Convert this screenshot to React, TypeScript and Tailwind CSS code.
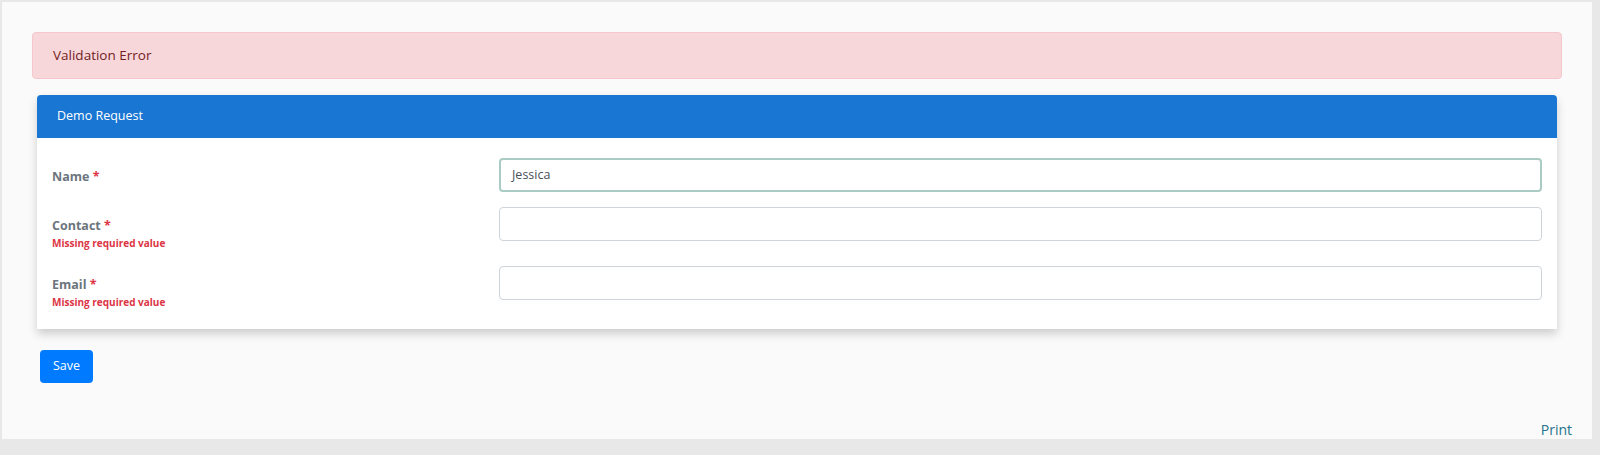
const fields = [
  { label: "Name", value: "Jessica", error: false, focused: true },
  { label: "Contact", value: "", error: true, focused: false },
  { label: "Email", value: "", error: true, focused: false },
];

export default function App() {
  return (
    <div className="min-h-[455px] bg-[#e8e8e8] pt-[2px] pl-[2px] pr-[8px] pb-[16px] font-['Open_Sans',sans-serif]">
      <div className="h-[437px] bg-[#fafafa] px-[30px] pt-[30px] flex flex-col">
        {/* Alert */}
        <div className="h-[47px] flex items-center px-[20px] bg-[#f8d7da] border border-[#f5c6cb] rounded-[4px] text-[#721c24] text-[13.5px]">
          Validation Error
        </div>

        {/* Card */}
        <div className="mx-[5px] mt-[16px] bg-white rounded-t-[4px] shadow-[0_5px_10px_rgba(0,0,0,0.18)]">
          <div className="h-[43px] flex items-center px-[20px] bg-[#1976d2] rounded-t-[4px] text-white text-[12.5px]">
            Demo Request
          </div>
          <div className="pt-[20px] px-[15px] pb-[19px] flex flex-col gap-[15px]">
            {fields.map((f) => (
              <div key={f.label} className="grid grid-cols-[30%_70%]">
                <div className="pt-[9px]">
                  <div className="leading-[20px] text-[12.5px] font-bold text-[#6c757d]">
                    {f.label} <span className="text-[#dc3545]">*</span>
                  </div>
                  {f.error && (
                    <div className="leading-[15px] text-[10px] font-bold text-[#dc3545]">
                      Missing required value
                    </div>
                  )}
                </div>
                <div
                  className={`h-[34px] flex items-center px-[11px] bg-white rounded-[4px] text-[12.5px] text-[#495057] ${
                    f.focused ? "border-2 border-[#a9cbc3]" : "border border-[#ced4da]"
                  }`}
                >
                  {f.value}
                </div>
              </div>
            ))}
          </div>
        </div>

        {/* Save */}
        <div className="mt-[21px] ml-[8px]">
          <button className="h-[33px] w-[53px] bg-[#007bff] rounded-[4px] text-white text-[12.5px]">
            Save
          </button>
        </div>

        <div className="flex-1" />
        <div className="self-end -mr-[10px] text-[14px] leading-[18px] text-[#24738a]">Print</div>
      </div>
    </div>
  );
}
